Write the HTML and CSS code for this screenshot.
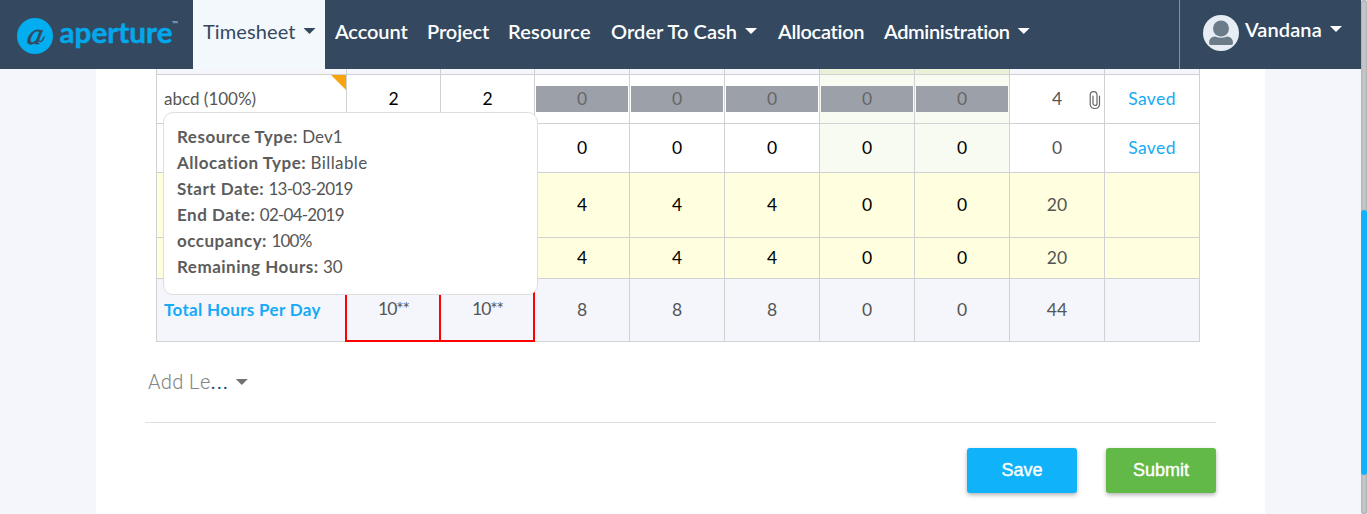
FILE: index.html
```html
<!DOCTYPE html>
<html lang="en">
<head>
<meta charset="utf-8">
<title>Aperture Timesheet</title>
<link rel="stylesheet" href="styles.css">
</head>
<body>
<div class="app">
  <div class="main">
    <header class="navbar">
      <div class="brand">
        <svg width="193" height="69" viewBox="0 0 193 69">
          <circle cx="35" cy="36" r="18" fill="#02aef0"/>
          <text transform="translate(26 44) skewX(-12)" class="brand-mark" textLength="15" lengthAdjust="spacingAndGlyphs">a</text>
          <path d="M39 41Q42 43 44 37" fill="none" stroke="#34495f" stroke-width="1.500" stroke-linecap="round"/>
          <text x="59.500" y="43" class="brand-name" textLength="113" lengthAdjust="spacingAndGlyphs">aperture</text>
          <text x="172" y="27" class="brand-tm">™</text>
        </svg>
      </div>
      <nav class="nav">
        <a class="nav-item active w-timesheet">Timesheet<i class="caret"></i></a>
        <a class="nav-item w-account">Account</a>
        <a class="nav-item w-project">Project</a>
        <a class="nav-item w-resource">Resource</a>
        <a class="nav-item w-order">Order To Cash<i class="caret"></i></a>
        <a class="nav-item w-allocation">Allocation</a>
        <a class="nav-item w-admin">Administration<i class="caret"></i></a>
      </nav>
      <div class="user">
        <svg width="36" height="36" viewBox="0 0 36 36">
          <circle cx="18" cy="18" r="18" fill="#e6edf4"/>
          <circle cx="18" cy="13.500" r="8" fill="#6b7c88"/>
          <path d="M6 28 Q6 22 12 21.500 Q18 24 24 21.500 Q30 22 30 28 Q30 30 28 30 H8 Q6 30 6 28Z" fill="#6b7c88"/>
        </svg>
        <span class="user-name">Vandana</span><i class="caret"></i>
      </div>
    </header>
    <main class="sheet">
      <div class="grid">
        <div class="cell head"></div><div class="cell head"></div><div class="cell head"></div><div class="cell head"></div><div class="cell head"></div><div class="cell head"></div><div class="cell head weekend"></div><div class="cell head weekend"></div><div class="cell head"></div><div class="cell head"></div>

        <div class="cell label noted">abcd (100%)
          <div class="tooltip">
            <p><b>Resource Type:</b> Dev1</p>
            <p><b>Allocation Type:</b> <span class="word">Billable</span></p>
            <p><b>Start Date:</b> <span class="num">13-03-2019</span></p>
            <p><b>End Date:</b> <span class="num">02-04-2019</span></p>
            <p><b>occupancy:</b> <span class="num">100%</span></p>
            <p><b>Remaining Hours:</b> 30</p>
          </div>
        </div>
        <div class="cell hours">2</div><div class="cell hours">2</div>
        <div class="cell locked"><span>0</span></div><div class="cell locked"><span>0</span></div><div class="cell locked"><span>0</span></div>
        <div class="cell locked weekend"><span>0</span></div><div class="cell locked weekend"><span>0</span></div>
        <div class="cell total">4
          <svg class="clip" width="12" height="20" viewBox="0 0 12 20"><path d="M10.500 6V14.500A4.700 4.700 0 0 1 1.200 14.500V5A3.400 3.400 0 0 1 8 5V13.500A2 2 0 0 1 4 13.500V6" fill="none" stroke="#666" stroke-width="1.200" stroke-linecap="round"/></svg>
        </div>
        <div class="cell status">Saved</div>

        <div class="cell label"></div><div class="cell hours"></div><div class="cell hours"></div>
        <div class="cell hours">0</div><div class="cell hours">0</div><div class="cell hours">0</div>
        <div class="cell hours weekend">0</div><div class="cell hours weekend">0</div>
        <div class="cell total">0</div><div class="cell status">Saved</div>

        <div class="cell leave"></div><div class="cell leave"></div><div class="cell leave"></div>
        <div class="cell hours leave">4</div><div class="cell hours leave">4</div><div class="cell hours leave">4</div><div class="cell hours leave">0</div><div class="cell hours leave">0</div>
        <div class="cell total leave">20</div><div class="cell leave"></div>

        <div class="cell leave"></div><div class="cell leave"></div><div class="cell leave"></div>
        <div class="cell hours leave">4</div><div class="cell hours leave">4</div><div class="cell hours leave">4</div><div class="cell hours leave">0</div><div class="cell hours leave">0</div>
        <div class="cell total leave">20</div><div class="cell leave"></div>

        <div class="cell label sum sum-label">Total Hours Per Day</div>
        <div class="cell sum over">10**</div><div class="cell sum over">10**</div>
        <div class="cell sum">8</div><div class="cell sum">8</div><div class="cell sum">8</div><div class="cell sum">0</div><div class="cell sum">0</div><div class="cell sum">44</div><div class="cell sum"></div>
      </div>
      <div class="add-leave"><span>Add Le<em>...</em></span><i class="caret"></i></div>
      <div class="actions">
        <button class="btn save">Save</button>
        <button class="btn submit">Submit</button>
      </div>
    </main>
  </div>
  <div class="scrollbar"><div class="thumb"></div></div>
</div>
</body>
</html>
```
FILE: styles.css
```css
* { box-sizing: border-box; }
body { margin: 0; font-family: Lato, "Liberation Sans", sans-serif; font-size: 17px; color: #555; }
.app { display: flex; width: 1367px; height: 514px; overflow: hidden; background: #f4f6fb; }
.main { width: 1361px; }
.navbar { display: flex; height: 69px; background: #34495f; color: #fff; }
.brand { width: 193px; height: 69px; }
.brand svg { display: block; }
.brand-mark { font: italic 30px "Liberation Serif", serif; fill: #34495f; stroke: #34495f; stroke-width: .6px; }
.brand-name { font: 700 29px Lato, sans-serif; fill: #02a8ea; stroke: #02a8ea; stroke-width: .5px; stroke-linejoin: round; }
.brand-tm { font: 8px Lato, sans-serif; fill: #b7c3cf; }
.nav { display: flex; flex: 1; }
.nav-item { display: flex; align-items: center; padding: 0 0 7px 10px; font-size: 20px; font-weight: 600; white-space: nowrap; }
.active { background: #f3f8fd; color: #34495f; font-weight: 400; }
.w-timesheet { width: 132px; letter-spacing: .1px; }
.w-account { width: 92px; letter-spacing: -.1px; }
.w-project { width: 81px; letter-spacing: -.1px; }
.w-resource { width: 103px; letter-spacing: .2px; }
.w-order { width: 167px; letter-spacing: .05px; }
.w-allocation { width: 106px; letter-spacing: -.3px; }
.w-admin { width: 166px; letter-spacing: -.35px; }
.caret { display: block; width: 12px; height: 6px; margin: 0 0 0 8px; background: currentColor; clip-path: polygon(0 0, 100% 0, 50% 100%); }
.user { display: flex; align-items: center; width: 182px; padding: 0 0 4px 23px; border-left: 1px solid #8593a0; font-size: 20px; font-weight: 600; }
.user-name { width: 77px; margin: -7px 0 0 6px; letter-spacing: .1px; }
.user .caret { margin-bottom: 7px; }

.sheet { width: 1169px; height: 445px; margin-left: 96px; padding: 0 49px 0 49px; background: #fff; }
.grid { display: grid; grid-template-columns: 190px 94px 94px repeat(7, 95px); grid-template-rows: 6px 49px 49px 65px 41px 63px; width: 1044px; margin-left: 11px; border-left: 1px solid #d0d1d3; }
.cell { display: flex; position: relative; align-items: center; justify-content: center; border: solid #d0d1d3; border-width: 0 1px 1px 0; padding-bottom: 2px; font-size: 17.500px; }
.head, .sum { background: #f4f6fb; }
.weekend { background: #f8fbf1; }
.head.weekend { background: #ebf1d8; }
.label { justify-content: flex-start; padding-left: 7px; font-size: 17px; }
.noted::after { content: ""; position: absolute; top: 0; right: 0; width: 15px; height: 15px; background: #f7a40e; clip-path: polygon(0 0, 100% 0, 100% 100%); }
.hours { color: #000; }
.locked { padding: 0 1px 1px; color: #666; }
.locked span { width: 92px; height: 26px; background: #9ca1a9; line-height: 25px; text-align: center; }
.clip { position: absolute; left: 79px; top: 15px; }
.status { color: #16aaf6; padding: 0 0 1px; letter-spacing: .4px; }
.leave { background: #ffffdf; }
.sum-label { color: #16aaf6; font-weight: 700; letter-spacing: .33px; }
.over { padding-bottom: 3px; letter-spacing: -1.1px; }
.over::after { content: ""; position: absolute; inset: -2px -1px -1px -2px; border: 2px solid #f00; }
.tooltip { position: absolute; z-index: 5; left: 6px; top: 37px; width: 375px; height: 183px; padding: 11px 13px; background: #fff; border: 1px solid #dedede; border-radius: 10px; }
.tooltip p { margin: 0; font-size: 17px; line-height: 26px; }
.tooltip b { color: #5c5c5c; letter-spacing: .5px; }
.num { letter-spacing: -.75px; }
.word { letter-spacing: .4px; }
.add-leave { display: flex; align-items: center; height: 81px; padding-left: 3px; border-bottom: 1px solid #dfdfdf; font: 300 20px Roboto, sans-serif; letter-spacing: .35px; color: #858585; }
.add-leave em { color: #1c5068; font-style: normal; font-weight: 400; letter-spacing: .8px; }
.add-leave .caret { color: #727272; margin-left: 7px; }
.actions { display: flex; justify-content: flex-end; gap: 29px; padding-top: 25px; }
.btn { width: 110px; height: 45px; padding: 0 0 1px; border: 0; border-radius: 3px; color: #fff; font: 18px "Liberation Sans", Arial, sans-serif; -webkit-text-stroke: .4px #fff; box-shadow: 0 2px 4px rgba(0,0,0,.3); }
.save { background: #10b2f9; }
.submit { background: #62b947; }
.scrollbar { width: 6px; height: 514px; padding-top: 210px; background: #c4c5c6; box-shadow: inset 0 0 2px #8b8b8b; border-radius: 3px; }
.thumb { height: 265px; background: #10b2f9; border-radius: 3px; }
```
